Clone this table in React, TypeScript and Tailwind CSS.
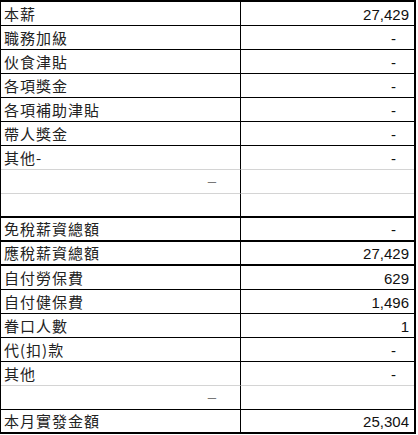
type Row = {
  label: string;
  value: string;
  note?: string;
  line?: "thin" | "gray" | "thick";
};

const rows: Row[] = [
  { label: "本薪", value: "27,429" },
  { label: "職務加級", value: "-" },
  { label: "伙食津貼", value: "-" },
  { label: "各項獎金", value: "-" },
  { label: "各項補助津貼", value: "-" },
  { label: "帶人獎金", value: "-" },
  { label: "其他-", value: "-", line: "gray" },
  { label: "", value: "", note: "–", line: "gray" },
  { label: "", value: "", line: "thick" },
  { label: "免稅薪資總額", value: "-", line: "thick" },
  { label: "應稅薪資總額", value: "27,429", line: "thick" },
  { label: "自付勞保費", value: "629" },
  { label: "自付健保費", value: "1,496" },
  { label: "眷口人數", value: "1" },
  { label: "代(扣)款", value: "-" },
  { label: "其他", value: "-", line: "gray" },
  { label: "", value: "", note: "–" },
  { label: "本月實發金額", value: "25,304", line: "thick" },
];

const lineClass = {
  thin: "border-b border-black",
  gray: "border-b border-[#d4d4d4]",
  thick: "border-b-2 border-black",
};

function SalaryRow({ row }: { row: Row }) {
  const line = lineClass[row.line ?? "thin"];
  return (
    <div className="flex h-[24px]">
      <div
        className={`w-[240px] border-r border-r-black ${line} flex items-end justify-between pl-[3px] pb-[2px]`}
      >
        <span
          className="text-[15px] leading-[18px] tracking-[1px] text-[#222]"
          style={{ fontFamily: '"Noto Sans CJK TC", "Noto Sans", sans-serif' }}
        >
          {row.label}
        </span>
        {row.note && (
          <span className="self-center pr-[24px] text-[15px] leading-none text-[#777] font-['Liberation_Sans',sans-serif]">
            {row.note}
          </span>
        )}
      </div>
      <div
        className={`flex-1 ${line} flex items-end justify-end pb-[2px] font-['Liberation_Sans',sans-serif] text-[15px] leading-[17px] text-[#111]`}
      >
        {row.value === "-" ? (
          <span className="pr-[18px]">-</span>
        ) : (
          <span className="pr-[5px]">{row.value}</span>
        )}
      </div>
    </div>
  );
}

export default function App() {
  return (
    <main className="w-[418px] h-[435px] bg-white overflow-hidden">
      <div className="w-[416px] border-t-[2px] border-l border-r-2 border-black">
        {rows.map((row, i) => (
          <SalaryRow key={i} row={row} />
        ))}
      </div>
    </main>
  );
}
